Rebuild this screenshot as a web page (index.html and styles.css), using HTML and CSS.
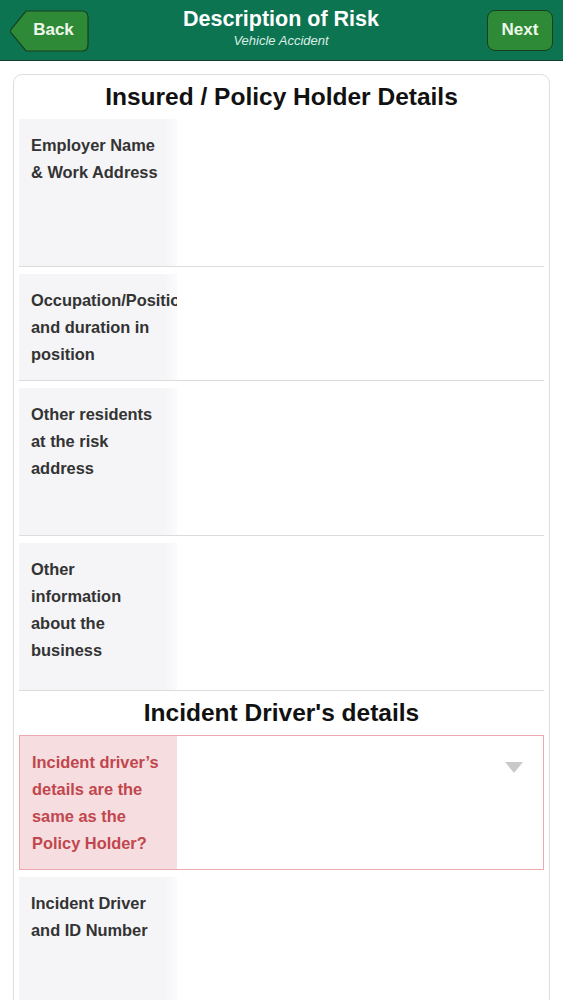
FILE: index.html
```html
<!DOCTYPE html>
<html lang="en">
<head>
    <meta charset="UTF-8">
    <meta name="viewport" content="width=device-width, initial-scale=1.0">
    <title>Description of Risk</title>
    <link rel="stylesheet" href="styles.css">
</head>
<body>
    <header class="nav-bar">
        <button class="nav-btn back-btn" type="button">
            <svg class="back-shape" width="81" height="42" viewBox="0 0 81 42">
                <path d="M17 1 H73 Q79 1 79 7.5 V34.5 Q79 41 73 41 H17 L1.8 22.3 Q1 21 1.8 19.7 Z" fill="#2f8a37" stroke="#173f1f" stroke-width="1.2"/>
            </svg>
            <span>Back</span>
        </button>
        <div class="nav-title">
            <h1>Description of Risk</h1>
            <span>Vehicle Accident</span>
        </div>
        <button class="nav-btn next-btn" type="button">Next</button>
    </header>

    <div class="form-card">
        <h2>Insured / Policy Holder Details</h2>

        <div class="field tall">
            <div class="field-label">Employer Name &amp; Work Address</div>
            <div class="field-input"></div>
        </div>
        <div class="field">
            <div class="field-label">Occupation/Position and duration in position</div>
            <div class="field-input"></div>
        </div>
        <div class="field tall">
            <div class="field-label">Other residents at the risk address</div>
            <div class="field-input"></div>
        </div>
        <div class="field tall">
            <div class="field-label">Other information about the business</div>
            <div class="field-input"></div>
        </div>

        <h2>Incident Driver's details</h2>

        <div class="field required">
            <div class="field-label">Incident driver’s details are the same as the Policy Holder?</div>
            <div class="field-input select">
                <div class="select-arrow"></div>
            </div>
        </div>
        <div class="field tall last">
            <div class="field-label">Incident Driver and ID Number</div>
            <div class="field-input"></div>
        </div>
    </div>
</body>
</html>
```

FILE: styles.css
```css
body {
    font-family: "Liberation Sans", Arial, sans-serif;
    margin: 0;
    padding: 0;
    background-color: #fff;
}

/* top bar */
.nav-bar {
    display: grid;
    grid-template-columns: 1fr auto 1fr;
    align-items: center;
    height: 60px;
    padding: 0 10px 0 9px;
    background-color: #0d7452;
    border-bottom: 1.5px solid #163a2a;
}
.nav-btn {
    font-family: "Liberation Sans", Arial, sans-serif;
    font-size: 17px;
    font-weight: bold;
    color: #eef8ea;
    height: 41px;
    padding: 0;
    cursor: pointer;
}
.back-btn {
    position: relative;
    justify-self: start;
    width: 81px;
    border: none;
    background: none;
}
.back-shape {
    position: absolute;
    left: 0;
    top: 0;
}
.back-btn span {
    position: relative;
    margin-left: 8px;
}
.next-btn {
    justify-self: end;
    width: 66px;
    background-color: #2f8a37;
    border: 1.2px solid #173f1f;
    border-radius: 8px;
}
.nav-title {
    align-self: start;
    padding-top: 7px;
    text-align: center;
    color: #fff;
}
.nav-title h1 {
    font-size: 21.5px;
    line-height: 24px;
    margin: 0;
}
.nav-title span {
    display: block;
    margin-top: 2px;
    font-size: 13px;
    line-height: 16px;
    font-style: italic;
    color: #d9eee4;
}

/* form */
.form-card {
    margin: 13px 13px 0;
    padding: 0 5px 20px;
    border: 1px solid #dedede;
    border-radius: 9px;
}
.form-card h2 {
    margin: 0;
    font-size: 24.5px;
    line-height: 44px;
    text-align: center;
    color: #111;
}
.field {
    display: flex;
    border-bottom: 1px solid #dcdcdc;
}
.field + .field {
    margin-top: 7px;
}
.field.tall {
    min-height: 147px;
}
.field-label {
    box-sizing: border-box;
    width: 158px;
    flex-shrink: 0;
    padding: 13px 15px 12px 12px;
    overflow: hidden;
    font-size: 16.4px;
    font-weight: bold;
    line-height: 27px;
    color: #333;
    background: linear-gradient(to right, #f5f5f7 92%, #fbfbfc);
}
.field-input {
    flex: 1;
}
.field.required {
    border: 1.5px solid #eeaab1;
}
.field.required .field-label {
    width: 156.5px;
    color: #c1464d;
    background: #f6dde0;
}
.field.required + .field {
    margin-top: 7px;
}
.field.last {
    min-height: 200px;
    border-bottom: none;
}
.select {
    display: flex;
    justify-content: flex-end;
    padding: 26px 20px 0 0;
}
.select-arrow {
    width: 0;
    height: 0;
    border-left: 9.5px solid transparent;
    border-right: 9.5px solid transparent;
    border-top: 11px solid #c9c9c9;
}
```
